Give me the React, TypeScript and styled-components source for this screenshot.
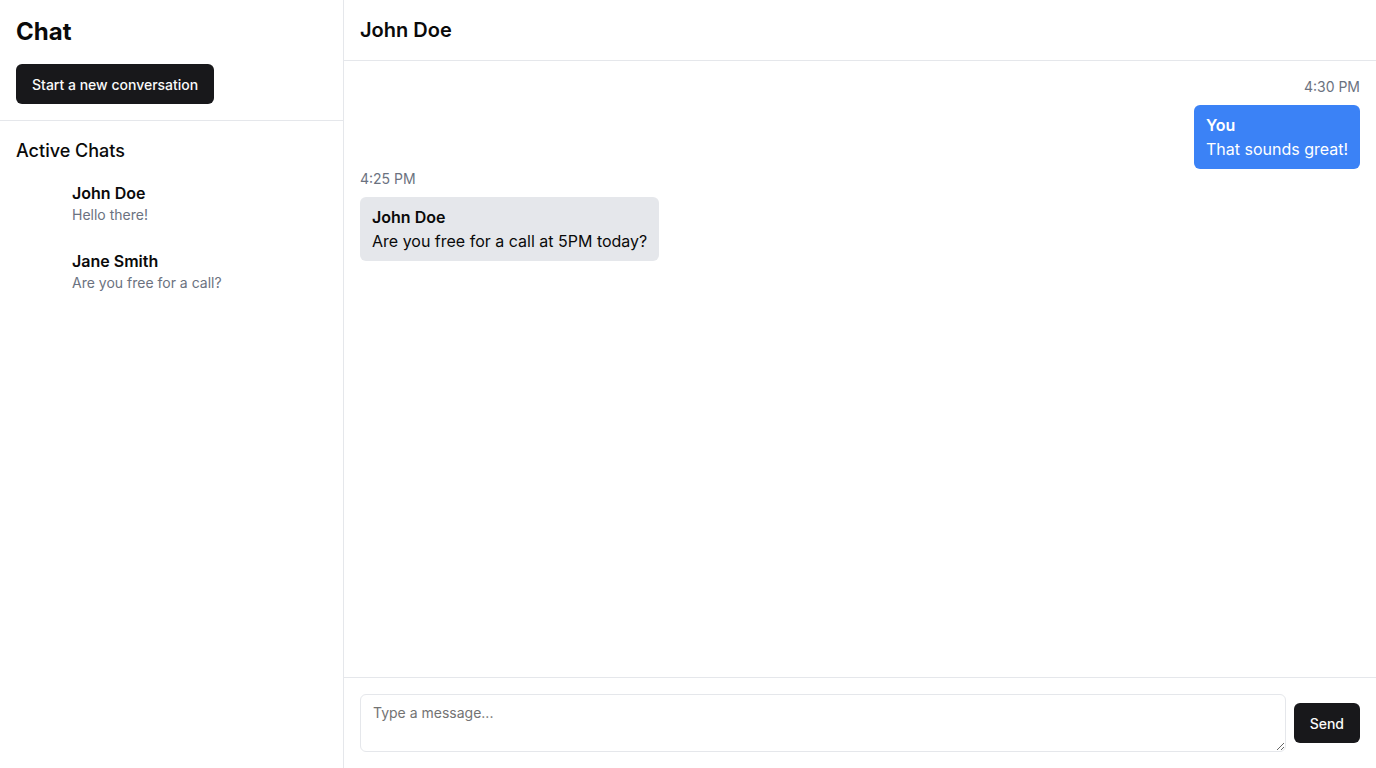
import styled, { createGlobalStyle } from 'styled-components';

const GlobalStyle = createGlobalStyle`
  * {
    box-sizing: border-box;
  }
  html, body {
    margin: 0;
    padding: 0;
    height: 100%;
  }
  body {
    font-family: Inter, 'Noto Sans', sans-serif;
    color: #0a0a0a;
    background: #fff;
  }
`;

const Layout = styled.div`
  display: flex;
  height: 100vh;
  width: 100vw;
  overflow: hidden;
`;

const Sidebar = styled.aside`
  width: 344px;
  flex-shrink: 0;
  border-right: 1px solid #e5e7eb;
  display: flex;
  flex-direction: column;
`;

const SidebarTop = styled.div`
  padding: 16px;
  border-bottom: 1px solid #e5e7eb;
  display: flex;
  flex-direction: column;
  align-items: flex-start;
  gap: 16px;
`;

const Title = styled.h1`
  margin: 0;
  font-size: 24px;
  line-height: 32px;
  font-weight: 700;
`;

const DarkButton = styled.button`
  height: 40px;
  padding: 0 16px;
  border: none;
  border-radius: 6px;
  background-color: #18181b;
  color: #fafafa;
  font-family: inherit;
  font-size: 14px;
  font-weight: 500;
  cursor: pointer;
`;

const ChatsSection = styled.div`
  padding: 16px;
`;

const SectionTitle = styled.h2`
  margin: 0 0 4px;
  font-size: 18px;
  line-height: 28px;
  font-weight: 500;
`;

const ChatItem = styled.div`
  display: flex;
  align-items: center;
  gap: 16px;
  padding: 12px 0;
`;

const Avatar = styled.div`
  width: 40px;
  height: 40px;
  flex-shrink: 0;
`;

const ChatName = styled.div`
  font-size: 16px;
  line-height: 24px;
  font-weight: 600;
`;

const ChatPreview = styled.div`
  font-size: 14px;
  line-height: 20px;
  color: #6b7280;
`;

const Main = styled.main`
  flex: 1;
  display: flex;
  flex-direction: column;
  min-width: 0;
`;

const MainHeader = styled.header`
  height: 61px;
  padding: 16px;
  border-bottom: 1px solid #e5e7eb;
  display: flex;
  align-items: center;
`;

const HeaderName = styled.h2`
  margin: 0;
  font-size: 20px;
  line-height: 28px;
  font-weight: 600;
`;

const Messages = styled.div`
  flex: 1;
  padding: 16px;
  display: flex;
  flex-direction: column;
  overflow-y: auto;
`;

const MessageGroup = styled.div<{ $mine?: boolean }>`
  display: flex;
  flex-direction: column;
  align-items: ${(p) => (p.$mine ? 'flex-end' : 'flex-start')};
`;

const Time = styled.div`
  font-size: 14px;
  line-height: 20px;
  color: #6b7280;
  margin-bottom: 8px;
`;

const Bubble = styled.div<{ $mine?: boolean }>`
  padding: 8px 12px;
  border-radius: 6px;
  background-color: ${(p) => (p.$mine ? '#3b82f6' : '#e5e7eb')};
  color: ${(p) => (p.$mine ? '#ffffff' : '#0a0a0a')};
  font-size: 16px;
  line-height: 24px;
`;

const Sender = styled.div`
  font-weight: 600;
`;

const Composer = styled.div`
  border-top: 1px solid #e5e7eb;
  padding: 16px;
  display: flex;
  align-items: center;
  gap: 8px;
`;

const MessageInput = styled.textarea`
  flex: 1;
  height: 58px;
  padding: 8px 12px;
  border: 1px solid #e5e7eb;
  border-radius: 6px;
  font-family: inherit;
  font-size: 14px;
  line-height: 20px;
  color: #0a0a0a;
  outline: none;

  &::placeholder {
    color: #737373;
  }
`;

const chats = [
  { name: 'John Doe', preview: 'Hello there!' },
  { name: 'Jane Smith', preview: 'Are you free for a call?' },
];

const messages = [
  { sender: 'You', text: 'That sounds great!', time: '4:30 PM', mine: true },
  { sender: 'John Doe', text: 'Are you free for a call at 5PM today?', time: '4:25 PM', mine: false },
];

function App() {
  return (
    <>
      <GlobalStyle />
      <Layout>
        <Sidebar>
          <SidebarTop>
            <Title>Chat</Title>
            <DarkButton>Start a new conversation</DarkButton>
          </SidebarTop>
          <ChatsSection>
            <SectionTitle>Active Chats</SectionTitle>
            {chats.map((chat) => (
              <ChatItem key={chat.name}>
                <Avatar />
                <div>
                  <ChatName>{chat.name}</ChatName>
                  <ChatPreview>{chat.preview}</ChatPreview>
                </div>
              </ChatItem>
            ))}
          </ChatsSection>
        </Sidebar>
        <Main>
          <MainHeader>
            <HeaderName>John Doe</HeaderName>
          </MainHeader>
          <Messages>
            {messages.map((msg) => (
              <MessageGroup key={msg.time} $mine={msg.mine}>
                <Time>{msg.time}</Time>
                <Bubble $mine={msg.mine}>
                  <Sender>{msg.sender}</Sender>
                  <div>{msg.text}</div>
                </Bubble>
              </MessageGroup>
            ))}
          </Messages>
          <Composer>
            <MessageInput placeholder="Type a message..." />
            <DarkButton>Send</DarkButton>
          </Composer>
        </Main>
      </Layout>
    </>
  );
}

export default App;
